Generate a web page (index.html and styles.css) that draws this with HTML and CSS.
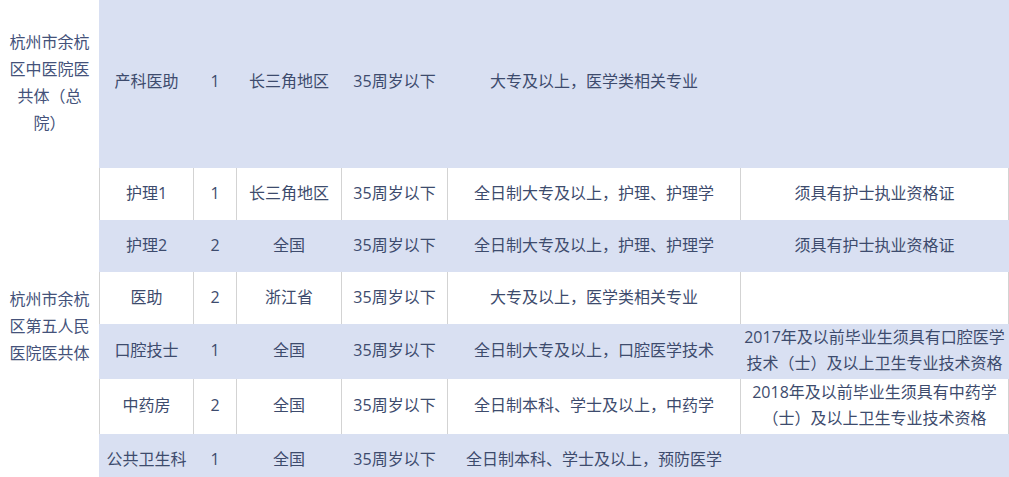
FILE: index.html
```html
<!DOCTYPE html>
<html lang="zh-CN">
<head>
<meta charset="utf-8">
<title>招聘岗位</title>
<link rel="stylesheet" href="styles.css">
</head>
<body>
<table class="jobs">
  <colgroup>
    <col class="c-org"><col class="c-post"><col class="c-num"><col class="c-area"><col class="c-age"><col class="c-edu"><col class="c-note">
  </colgroup>
  <tbody>
    <tr class="row blue tall">
      <td class="org">杭州市余杭区中医院医共体（总院）</td>
      <td class="first">产科医助</td>
      <td>1</td>
      <td>长三角地区</td>
      <td>35周岁以下</td>
      <td>大专及以上，医学类相关专业</td>
      <td class="last"></td>
    </tr>
    <tr class="row white">
      <td class="org" rowspan="6">杭州市余杭区第五人民医院医共体</td>
      <td class="first">护理1</td>
      <td>1</td>
      <td>长三角地区</td>
      <td>35周岁以下</td>
      <td>全日制大专及以上，护理、护理学</td>
      <td class="last">须具有护士执业资格证</td>
    </tr>
    <tr class="row blue">
      <td class="first">护理2</td>
      <td>2</td>
      <td>全国</td>
      <td>35周岁以下</td>
      <td>全日制大专及以上，护理、护理学</td>
      <td class="last">须具有护士执业资格证</td>
    </tr>
    <tr class="row white">
      <td class="first">医助</td>
      <td>2</td>
      <td>浙江省</td>
      <td>35周岁以下</td>
      <td>大专及以上，医学类相关专业</td>
      <td class="last"></td>
    </tr>
    <tr class="row blue">
      <td class="first">口腔技士</td>
      <td>1</td>
      <td>全国</td>
      <td>35周岁以下</td>
      <td>全日制大专及以上，口腔医学技术</td>
      <td class="last">2017年及以前毕业生须具有口腔医学技术（士）及以上卫生专业技术资格</td>
    </tr>
    <tr class="row white">
      <td class="first">中药房</td>
      <td>2</td>
      <td>全国</td>
      <td>35周岁以下</td>
      <td>全日制本科、学士及以上，中药学</td>
      <td class="last">2018年及以前毕业生须具有中药学（士）及以上卫生专业技术资格</td>
    </tr>
    <tr class="row blue">
      <td class="first">公共卫生科</td>
      <td>1</td>
      <td>全国</td>
      <td>35周岁以下</td>
      <td>全日制本科、学士及以上，预防医学</td>
      <td class="last"></td>
    </tr>
  </tbody>
</table>
</body>
</html>
```

FILE: styles.css
```css
html, body {
  margin: 0;
  padding: 0;
  background: #ffffff;
}

body {
  font-family: "Open Sans", "Noto Sans CJK SC", "Microsoft YaHei", sans-serif;
  font-size: 16px;
  color: #3d4b6d;
  overflow: hidden;
}

.jobs {
  width: 1009px;
  table-layout: fixed;
  border-collapse: separate;
  border-spacing: 0;
}

.c-org { width: 99px; }
.c-post { width: 94px; }
.c-num { width: 43px; }
.c-area { width: 105px; }
.c-age { width: 106px; }
.c-edu { width: 293px; }
.c-note { width: 269px; }

.jobs td {
  box-sizing: border-box;
  padding: 0 1px 3px;
  text-align: center;
  vertical-align: middle;
  line-height: 26px;
  height: 52px;
  border-left: 1px solid transparent;
}

.row.tall td {
  height: 168px;
  padding-bottom: 7px;
}

.row.blue td {
  background: #d9e0f2;
  border-left-color: #d9e0f2;
}

.row.white td {
  background: #ffffff;
  border-left-color: #d3d3d3;
}

.row.white td.last {
  border-right: 1px solid #d3d3d3;
}

.row.blue td.last {
  border-right: 1px solid #d9e0f2;
}

.row td.org {
  background: #ffffff;
  border-left: 0;
  padding: 0 8px 2px;
  line-height: 27px;
  color: #44527a;
}
```
